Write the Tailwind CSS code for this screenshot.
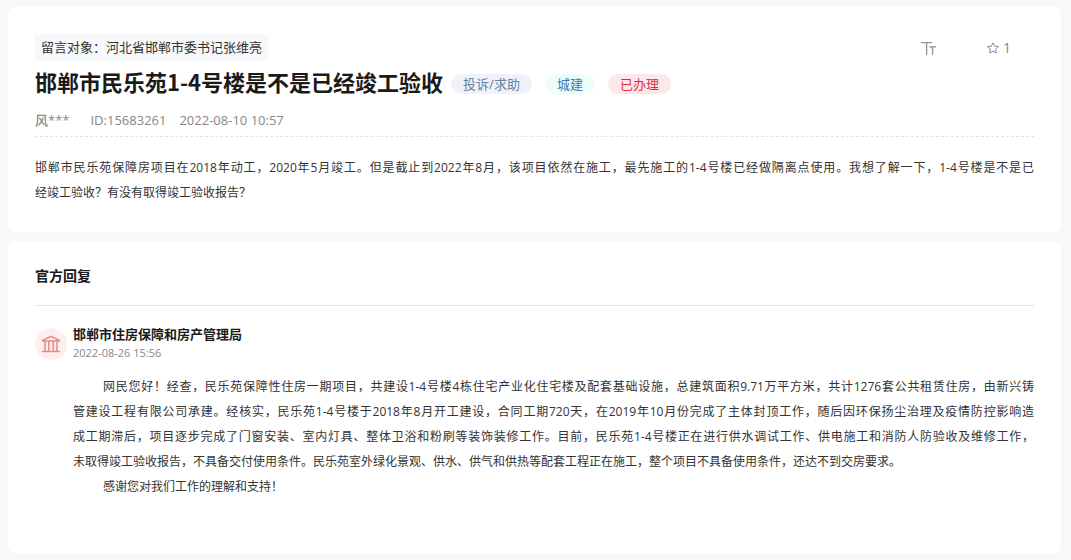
<!DOCTYPE html>
<html lang="zh-CN">
  <head>
    <meta charset="UTF-8" />
    <meta name="viewport" content="width=device-width, initial-scale=1.0" />
    <script src="https://cdn.jsdelivr.net/npm/@tailwindcss/browser@4"></script>
    <title>邯郸市民乐苑1-4号楼是不是已经竣工验收</title>
  </head>
  <body
    class="min-h-screen bg-[#f7f8fa] pt-[7px] pb-[7px] pl-2 pr-[10px] flex flex-col gap-[9px] text-[13px] text-[#333] font-['Open_Sans','Noto_Sans_CJK_SC',sans-serif]"
  >
    <!-- Message -->
    <article class="bg-white rounded-lg px-[27px] pt-[27px] pb-[27px]">
      <div class="flex items-center justify-between">
        <p class="h-[27px] px-[6px] bg-[#f6f8fa] leading-[26px]">
          留言对象：河北省邯郸市委书记张维亮
        </p>
        <div class="flex items-center gap-[50px] pr-[23px] text-[#888]">
          <button type="button" aria-label="字号" class="cursor-pointer">
            <svg class="w-4 h-4" viewBox="0 0 16 16" fill="none" stroke="#929292" stroke-width="1.3">
              <path d="M0 2.6H11M5.6 2.6V15M8.2 6.8H15M11.6 6.8V15" />
            </svg>
          </button>
          <button type="button" class="flex items-center gap-1 text-sm leading-5 cursor-pointer">
            <svg class="w-3 h-3" viewBox="0 0 12 12" fill="none" stroke="#8a8a8a" stroke-linejoin="round">
              <path d="M6 .8 7.6 4.1 11.4 4.6 8.7 7.2 9.4 11 6 9.2 2.6 11 3.3 7.2 .6 4.6 4.4 4.1Z" />
            </svg>
            <span>1</span>
          </button>
        </div>
      </div>
      <div class="flex items-center mt-1">
        <h1 class="text-[22px] leading-8 font-bold text-[#1a1a1a] font-['Noto_Sans_CJK_SC',sans-serif]">
          邯郸市民乐苑1-4号楼是不是已经竣工验收
        </h1>
        <div class="flex gap-[13px] mt-[6px] ml-2 leading-5">
          <span class="px-3 rounded-full bg-[#eff3f9] text-[#6a7f9c]">投诉/求助</span>
          <span class="px-3 rounded-full bg-[#ecfdfa] text-[#4576b5]">城建</span>
          <span class="px-3 rounded-full bg-[#fce8ea] text-[#d9303e]">已办理</span>
        </div>
      </div>
      <div class="flex pt-[13px] pb-[6px] leading-5 text-[#888] border-b border-dashed border-[#e3e3e3]">
        <span class="font-medium">风***</span>
        <span class="ml-[21px]">ID:15683261</span>
        <span class="ml-[13px]">2022-08-10 10:57</span>
      </div>
      <div class="mt-[18px] text-xs leading-[25px]">
        <p class="text-justify [text-align-last:justify]">
          邯郸市民乐苑保障房项目在2018年动工，2020年5月竣工。但是截止到2022年8月，该项目依然在施工，最先施工的1-4号楼已经做隔离点使用。我想了解一下，1-4号楼是不是已
        </p>
        <p>经竣工验收？有没有取得竣工验收报告？</p>
      </div>
    </article>

    <!-- Official reply -->
    <section class="bg-white rounded-lg px-[27px] pb-[54px]">
      <h2 class="pt-[23px] pb-[17px] text-sm leading-6 font-bold text-[#1a1a1a] border-b border-[#e5e5e5]">
        官方回复
      </h2>
      <div class="flex gap-[6px] pt-[18px]">
        <div class="w-8 h-8 mt-1 shrink-0 rounded-full bg-[#ffeeee] flex items-center justify-center">
          <svg class="w-[18px] h-[18px]" viewBox="0 0 18 18" fill="none" stroke="#e58a86" stroke-width="1.5">
            <path d="M.8 6V5.2L9 1.4 17.2 5.2V6ZM0 16.4H18M3 6.2V16M6.8 6.2V16M11.2 6.2V16M15 6.2V16" />
          </svg>
        </div>
        <div class="flex-1 min-w-0">
          <p class="leading-5 font-bold text-[#1a1a1a]">邯郸市住房保障和房产管理局</p>
          <time class="block text-[11px] leading-[18px] text-[#888]">2022-08-26 15:56</time>
          <div class="mt-3 text-xs leading-[25px]">
            <p class="indent-[30px] text-justify [text-align-last:justify]">
              网民您好！经查，民乐苑保障性住房一期项目，共建设1-4号楼4栋住宅产业化住宅楼及配套基础设施，总建筑面积9.71万平方米，共计1276套公共租赁住房，由新兴铸<br />管建设工程有限公司承建。经核实，民乐苑1-4号楼于2018年8月开工建设，合同工期720天，在2019年10月份完成了主体封顶工作，随后因环保扬尘治理及疫情防控影响造<br />成工期滞后，项目逐步完成了门窗安装、室内灯具、整体卫浴和粉刷等装饰装修工作。目前，民乐苑1-4号楼正在进行供水调试工作、供电施工和消防人防验收及维修工作，
            </p>
            <p>
              未取得竣工验收报告，不具备交付使用条件。民乐苑室外绿化景观、供水、供气和供热等配套工程正在施工，整个项目不具备使用条件，还达不到交房要求。
            </p>
            <p class="indent-[30px]">感谢您对我们工作的理解和支持！</p>
          </div>
        </div>
      </div>
    </section>
  </body>
</html>
